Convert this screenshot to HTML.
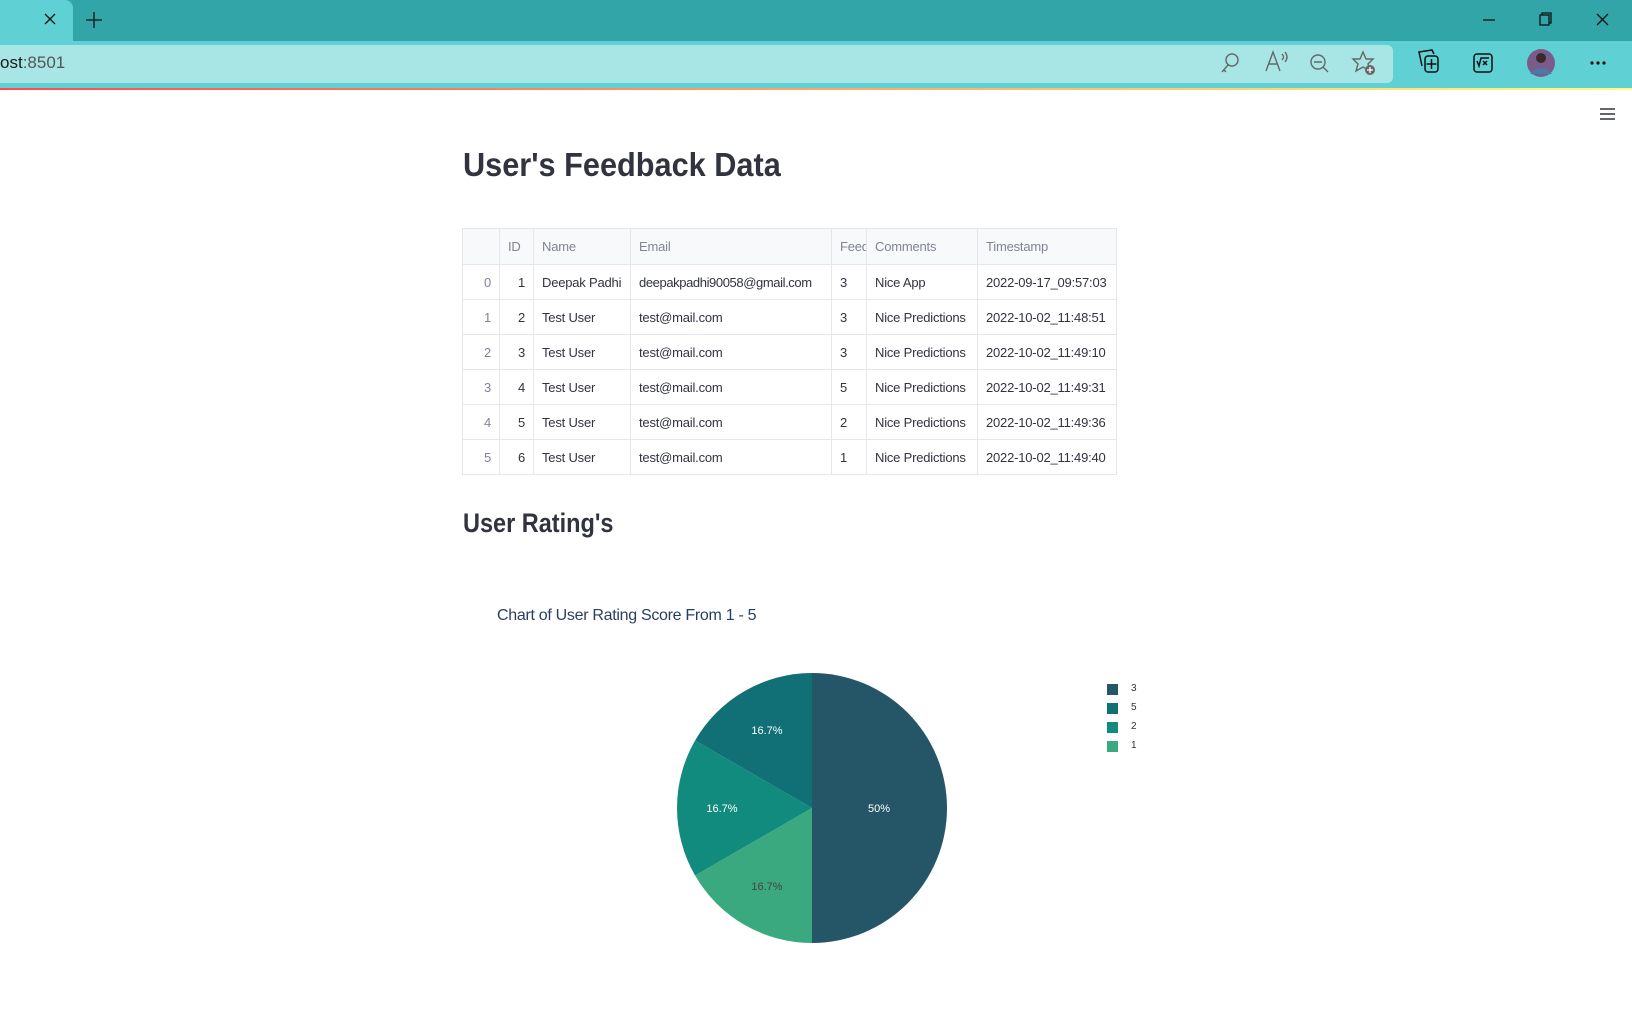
<!DOCTYPE html>
<html><head><meta charset="utf-8">
<style>
*{margin:0;padding:0;box-sizing:border-box}
body{width:1632px;height:1016px;overflow:hidden;background:#fff;font-family:"Liberation Sans",sans-serif;position:relative}
.abs{position:absolute}
table{border-collapse:collapse;font-size:13px;letter-spacing:-0.2px;color:#31333f}
td,th{border:1px solid #e6e7ea;height:35px;padding:0 8px;white-space:nowrap;font-weight:normal}
th{background:#f8f9fb;color:#808495;text-align:left;height:36px}
td.i{color:#808495;text-align:right}
td.r{text-align:right}
.leg{position:absolute;left:1107px;width:11px;height:11px}
.lt{position:absolute;left:1131px;font-size:10px;color:#31333f}
</style></head><body>
<div class="abs" style="left:0;top:0;width:1632px;height:41px;background:#31a5a8"></div>
<div class="abs" style="left:0;top:0;width:73px;height:41px;background:#5fd1d4;border-top-right-radius:8px"></div>
<svg class="abs" style="left:0;top:0" width="1632" height="41">
<g stroke="#111" stroke-width="1.3" fill="none">
<path d="M45 14 L55 24 M55 14 L45 24"/>
<path d="M94 12 V28 M86 20 H102"/>
<path d="M1483 20 H1495"/>
<rect x="1540" y="15" width="9" height="10"/><path d="M1542 15 V13 H1551 V23 H1549"/>
<path d="M1597 14 L1608 25 M1608 14 L1597 25"/>
</g></svg>
<div class="abs" style="left:0;top:41px;width:1632px;height:48px;background:#5fd1d4"></div>
<div class="abs" style="left:0;top:45px;width:1393px;height:38px;background:#a8e6e6;border-radius:0 6px 6px 0"></div>
<div class="abs" style="left:0;top:53px;font-size:17px;color:#1a1a1a">ost<span style="color:#555">:8501</span></div>
<svg class="abs" style="left:1200px;top:40px" width="432" height="50">
<g stroke="#666" stroke-width="1.4" fill="none">
<circle cx="32" cy="20" r="6"/><path d="M28 25 L22 32 M24 30 L26 32"/>
<path d="M66 31 L73 12 L80 31 M69 24 H77 M82 14 Q85 17 82 20 M85 12 Q89 17 85 22"/>
<circle cx="118" cy="22" r="7"/><path d="M114 22 H122 M123 27 L128 32"/>
<path d="M163 12 L166 19 L173 19 L168 24 L170 31 L163 27 L156 31 L158 24 L153 19 L160 19 Z"/>
</g>
<circle cx="170" cy="30" r="5" fill="#666"/><path d="M167 30 H173 M170 27 V33" stroke="#fff" stroke-width="1.3"/>
<g stroke="#111" stroke-width="1.5" fill="none">
<path d="M222 26 L219 12 L232 10 L234 14"/><rect x="225" y="16" width="13" height="16" rx="3"/><path d="M231.5 19 V29 M226.5 24 H236.5"/>
<rect x="274" y="14" width="18" height="18" rx="3"/><path d="M277 21 L279 26 L281 18 H289 M283 21 L287 25 M287 21 L283 25"/>
</g>
<circle cx="341" cy="23" r="14" fill="#7a5c8a"/><circle cx="341" cy="18" r="5" fill="#3a2a2a"/><path d="M330 34 Q341 22 352 34" fill="#4a7aa8"/>
<g fill="#111"><circle cx="392" cy="23" r="1.6"/><circle cx="398" cy="23" r="1.6"/><circle cx="404" cy="23" r="1.6"/></g>
</svg>
<div class="abs" style="left:0;top:88px;width:1632px;height:2px;background:linear-gradient(90deg,#ff4b4b,#fffd80)"></div>
<svg class="abs" style="left:1598px;top:106px" width="20" height="16"><g stroke="#31333f" stroke-width="1.6"><path d="M2 3H17M2 8H17M2 13H17"/></g></svg>
<div class="abs" style="left:463px;top:146px;font-size:33px;font-weight:bold;color:#31333f;transform:scaleX(0.93);transform-origin:left">User's Feedback Data</div>
<table class="abs" style="left:462px;top:228px">
<tr><th style="width:37px"></th><th style="width:34px">ID</th><th style="width:97px">Name</th><th style="width:201px">Email</th><th style="width:35px;padding:0 0 0 8px;overflow:hidden;max-width:35px">Feed</th><th style="width:111px">Comments</th><th style="width:139px">Timestamp</th></tr>
<tr><td class="i">0</td><td class="r">1</td><td>Deepak Padhi</td><td style="letter-spacing:-0.4px">deepakpadhi90058@gmail.com</td><td>3</td><td>Nice App</td><td>2022-09-17_09:57:03</td></tr>
<tr><td class="i">1</td><td class="r">2</td><td>Test User</td><td>test@mail.com</td><td>3</td><td>Nice Predictions</td><td>2022-10-02_11:48:51</td></tr>
<tr><td class="i">2</td><td class="r">3</td><td>Test User</td><td>test@mail.com</td><td>3</td><td>Nice Predictions</td><td>2022-10-02_11:49:10</td></tr>
<tr><td class="i">3</td><td class="r">4</td><td>Test User</td><td>test@mail.com</td><td>5</td><td>Nice Predictions</td><td>2022-10-02_11:49:31</td></tr>
<tr><td class="i">4</td><td class="r">5</td><td>Test User</td><td>test@mail.com</td><td>2</td><td>Nice Predictions</td><td>2022-10-02_11:49:36</td></tr>
<tr><td class="i">5</td><td class="r">6</td><td>Test User</td><td>test@mail.com</td><td>1</td><td>Nice Predictions</td><td>2022-10-02_11:49:40</td></tr>
</table>
<div class="abs" style="left:463px;top:508px;font-size:27px;font-weight:bold;color:#31333f;transform:scaleX(0.87);transform-origin:left">User Rating's</div>
<div class="abs" style="left:497px;top:607px;font-size:16px;color:#2a3f5f;letter-spacing:-0.3px">Chart of User Rating Score From 1 - 5</div>
<svg class="abs" style="left:0;top:0" width="1632" height="1016">
<path d="M812 808 L812 673 A135 135 0 0 1 812 943 Z" fill="#245667"/>
<path d="M812 808 L812 943 A135 135 0 0 1 695.1 875.5 Z" fill="#3aa97f"/>
<path d="M812 808 L695.1 875.5 A135 135 0 0 1 695.1 740.5 Z" fill="#118b7e"/>
<path d="M812 808 L695.1 740.5 A135 135 0 0 1 812 673 Z" fill="#107075"/>
<g font-family="Liberation Sans,sans-serif" font-size="11" text-anchor="middle">
<text x="879" y="812" fill="#fff">50%</text>
<text x="767" y="734" fill="#fff">16.7%</text>
<text x="722" y="812" fill="#fff">16.7%</text>
<text x="767" y="890" fill="#444">16.7%</text>
</g></svg>
<div class="leg" style="top:684px;background:#245667"></div><div class="lt" style="top:683px">3</div>
<div class="leg" style="top:703px;background:#107075"></div><div class="lt" style="top:702px">5</div>
<div class="leg" style="top:722px;background:#118b7e"></div><div class="lt" style="top:721px">2</div>
<div class="leg" style="top:741px;background:#3aa97f"></div><div class="lt" style="top:740px">1</div>
</body></html>
